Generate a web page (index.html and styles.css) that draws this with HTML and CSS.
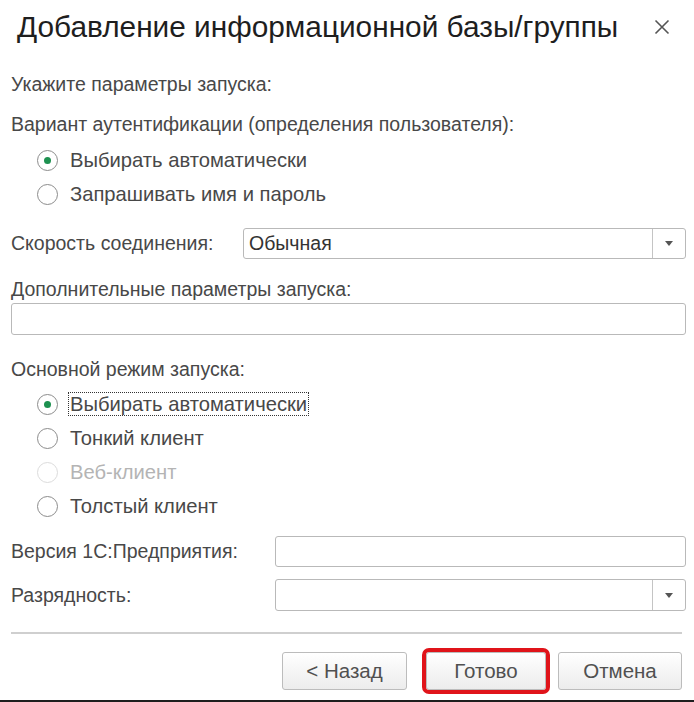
FILE: index.html
```html
<!DOCTYPE html>
<html lang="ru">
<head>
    <meta charset="UTF-8">
    <meta name="viewport" content="width=device-width, initial-scale=1.0">
    <title>Добавление информационной базы/группы</title>
    <link rel="stylesheet" href="styles.css">
</head>
<body>
    <div class="dialog">
        <div class="header">
            <h1>Добавление информационной базы/группы</h1>
            <span class="close">
                <svg width="16" height="16" viewBox="0 0 16 16">
                    <path d="M1.5 1.5 L14.5 14.5 M14.5 1.5 L1.5 14.5" stroke="#555" stroke-width="1.6" fill="none"/>
                </svg>
            </span>
        </div>

        <div class="content">
            <div class="text-row hint">Укажите параметры запуска:</div>
            <div class="text-row auth-label">Вариант аутентификации (определения пользователя):</div>
            <div class="radio-group first-group">
                <div class="radio-row"><span class="radio checked"></span><span>Выбирать автоматически</span></div>
                <div class="radio-row"><span class="radio"></span><span>Запрашивать имя и пароль</span></div>
            </div>

            <div class="field-row speed-row">
                <label>Скорость соединения:</label>
                <div class="combo">
                    <span class="combo-value">Обычная</span>
                    <span class="combo-btn"><i class="arrow"></i></span>
                </div>
            </div>

            <div class="text-row extra-label">Дополнительные параметры запуска:</div>
            <div class="input extra-input"></div>

            <div class="text-row mode-label">Основной режим запуска:</div>
            <div class="radio-group second-group">
                <div class="radio-row"><span class="radio checked"></span><span class="focused">Выбирать автоматически</span></div>
                <div class="radio-row"><span class="radio"></span><span>Тонкий клиент</span></div>
                <div class="radio-row disabled"><span class="radio"></span><span>Веб-клиент</span></div>
                <div class="radio-row"><span class="radio"></span><span>Толстый клиент</span></div>
            </div>

            <div class="field-row version-row">
                <label>Версия 1С:Предприятия:</label>
                <div class="input"></div>
            </div>
            <div class="field-row bits-row">
                <label>Разрядность:</label>
                <div class="combo">
                    <span class="combo-value"></span>
                    <span class="combo-btn"><i class="arrow"></i></span>
                </div>
            </div>

            <div class="separator"></div>

            <div class="buttons">
                <button class="btn back">&lt; Назад</button>
                <button class="btn done">Готово</button>
                <button class="btn cancel">Отмена</button>
            </div>
        </div>
    </div>
</body>
</html>
```

FILE: styles.css
```css
/* General */
body {
    margin: 0;
    padding: 0;
    font-family: "Liberation Sans", Arial, sans-serif;
    background-color: #ffffff;
    color: #484848;
}

.dialog {
    width: 694px;
    height: 702px;
    box-sizing: border-box;
    border-bottom: 2px solid #1e1e1e;
    overflow: hidden;
}

/* Header */
.header {
    height: 54px;
    display: flex;
    align-items: center;
    justify-content: space-between;
    padding: 0 24px 0 17px;
}

.header h1 {
    margin: 0;
    font-size: 29.8px;
    font-weight: normal;
    color: #1e1e1e;
    white-space: nowrap;
}

.close {
    display: flex;
    width: 16px;
    height: 16px;
}

/* Content */
.content {
    padding: 0 8px 0 11px;
    font-size: 19.5px;
}

.text-row {
    height: 24px;
    line-height: 24px;
    white-space: nowrap;
}

.hint { margin-top: 18px; }
.auth-label { margin-top: 16px; }
.extra-label { margin-top: 18px; }
.mode-label { margin-top: 22px; }

.radio-group {
    padding-left: 26px;
    font-size: 20.2px;
}

.first-group { margin-top: 7px; }
.second-group { margin-top: 6px; }

.radio-row {
    height: 34px;
    display: flex;
    align-items: center;
    gap: 12px;
    white-space: nowrap;
}

.radio {
    width: 21px;
    height: 21px;
    box-sizing: border-box;
    border: 1.5px solid #8c8c8c;
    border-radius: 50%;
    background: #ffffff;
    display: flex;
    align-items: center;
    justify-content: center;
}

.radio.checked::after {
    content: "";
    width: 7px;
    height: 7px;
    border-radius: 50%;
    background: #1d9150;
}

.radio-row.disabled {
    color: #b4b4b4;
}

.radio-row.disabled .radio {
    border-color: #dcdcdc;
}

.focused {
    outline: 1px dotted #333333;
    outline-offset: 1px;
    line-height: 20px;
}

/* Fields */
.field-row {
    display: flex;
    align-items: center;
    white-space: nowrap;
}

.field-row label {
    flex: none;
}

.speed-row { margin-top: 17px; }
.speed-row label { width: 232px; }
.version-row { margin-top: 13px; }
.bits-row { margin-top: 12px; }
.version-row label,
.bits-row label { width: 264px; }

.input,
.combo {
    flex: 1;
    box-sizing: border-box;
    border: 1px solid #b9b9b9;
    border-radius: 3px;
    background: #ffffff;
}

.combo {
    height: 31px;
    display: flex;
    align-items: stretch;
}

.combo-value {
    flex: 1;
    padding-left: 5px;
    line-height: 28px;
    color: #333333;
}

.combo-btn {
    width: 32px;
    border-left: 1px solid #c4c4c4;
    display: flex;
    align-items: center;
    justify-content: center;
}

.arrow {
    width: 0;
    height: 0;
    border-left: 4px solid transparent;
    border-right: 4px solid transparent;
    border-top: 5px solid #555555;
}

.extra-input {
    height: 32px;
    margin-top: 2px;
}

.version-row .input { height: 31px; }
.bits-row .combo { height: 32px; }

.separator {
    margin: 21px 4px 0 0;
    height: 2px;
    background: #cfcfcf;
}

/* Buttons */
.buttons {
    margin-top: 18px;
    display: flex;
    justify-content: flex-end;
    padding-right: 4px;
}

.btn {
    height: 38px;
    box-sizing: border-box;
    border: 1px solid #bcbcbc;
    border-radius: 3px;
    background: linear-gradient(#ffffff, #ececec);
    font-family: "Liberation Sans", Arial, sans-serif;
    font-size: 20.5px;
    color: #505050;
}

.back { width: 125px; }
.done { width: 120px; margin-left: 19px; outline: 4px solid #e0141a; outline-offset: 0; }
.cancel { width: 124px; margin-left: 12px; }
```
